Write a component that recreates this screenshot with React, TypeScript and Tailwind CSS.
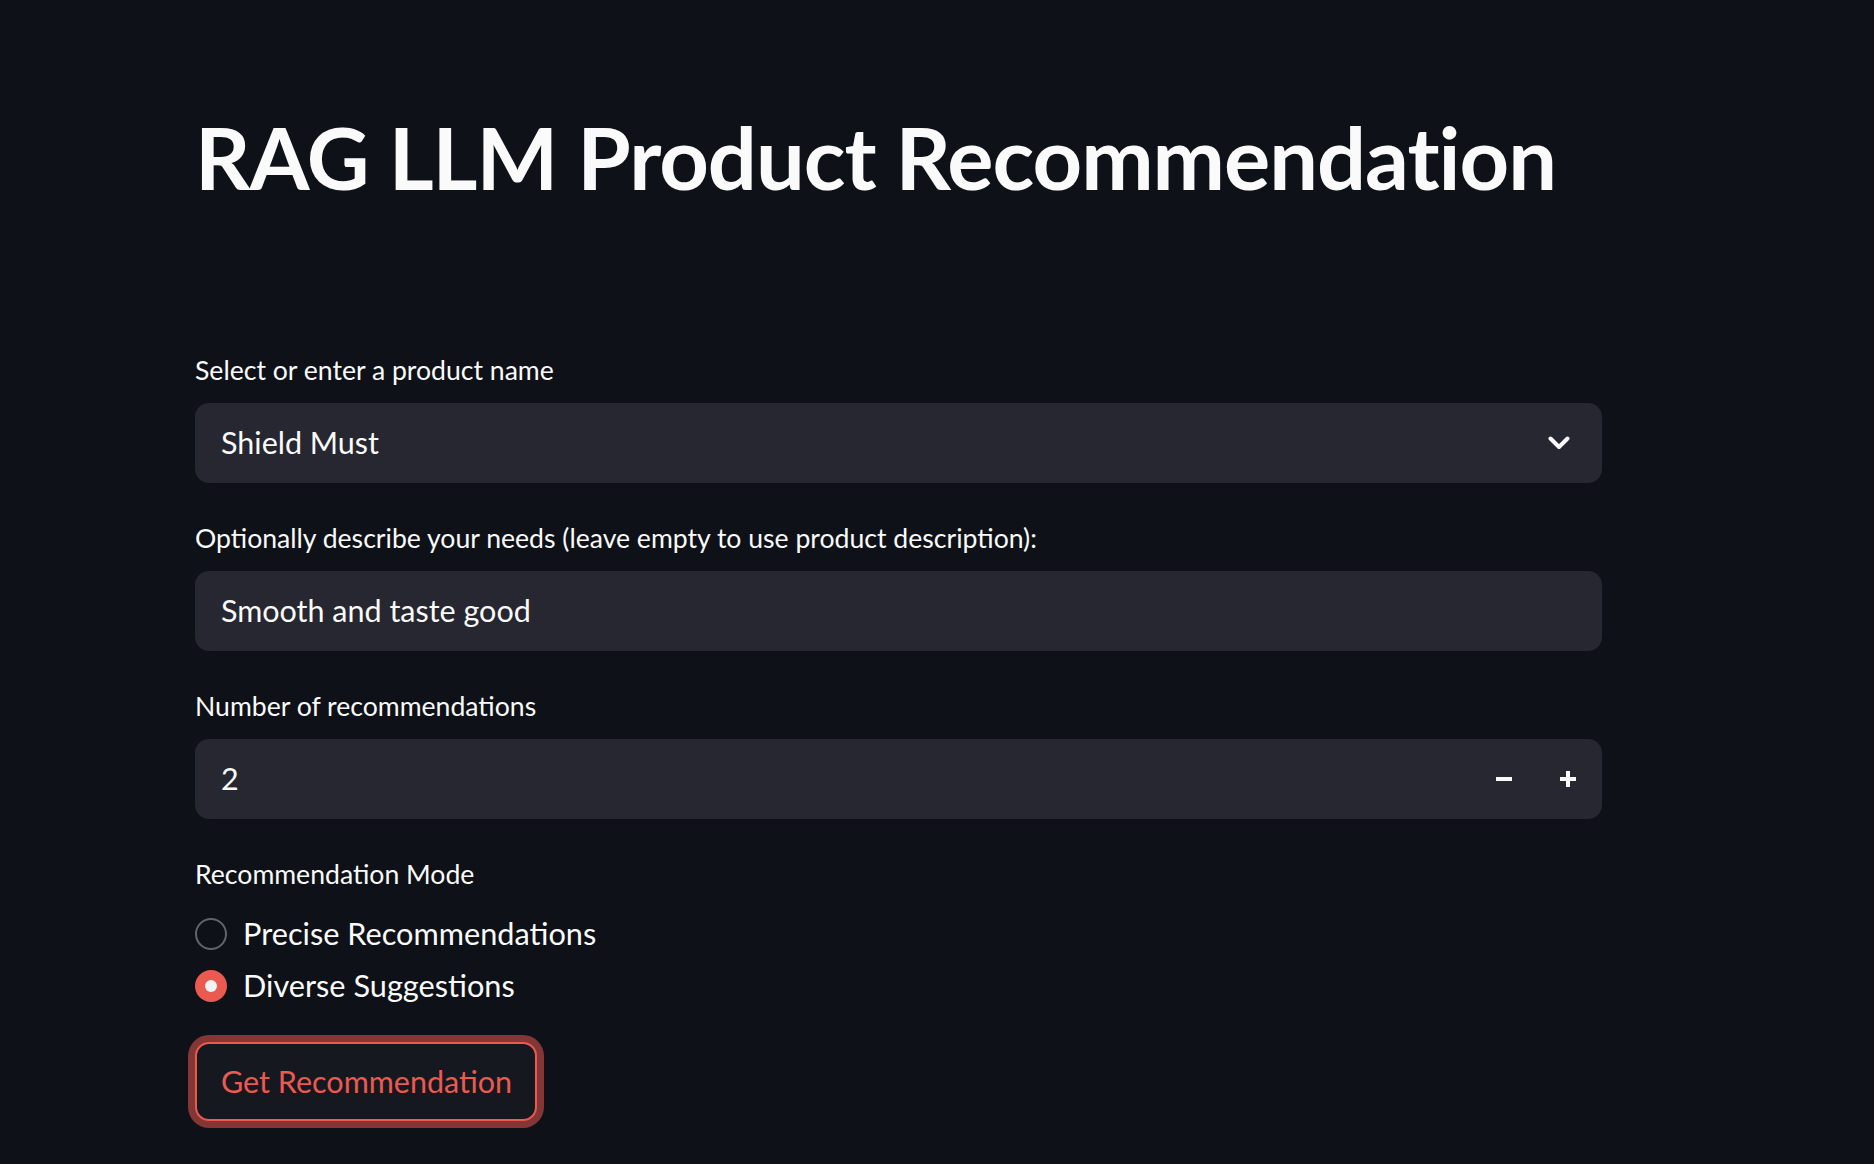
import React from "react";

const font = { fontFamily: "Lato, 'Noto Sans', sans-serif" };

function Label({ children }: { children: React.ReactNode }) {
  return (
    <div className="h-[40px] flex items-center mb-[12px] text-[26.6px] text-[#fafafa]">{children}</div>
  );
}

export default function App() {
  return (
    <div className="w-[1874px] h-[1164px] bg-[#0e1117] overflow-hidden" style={font}>
      <div className="pl-[195px] pt-[104px] w-[1602px] flex flex-col">
        <h1 className="h-[106px] flex items-center text-[86.5px] font-bold text-[#fafafa] tracking-[-1px] mb-[141px]">
          RAG LLM Product Recommendation
        </h1>

        <Label>Select or enter a product name</Label>
        <div className="h-[80px] rounded-[14px] bg-[#262730] flex items-center justify-between pl-[26px] pr-[32px] text-[30.5px] text-[#fafafa]">
          <span>Shield Must</span>
          <svg width="22" height="14" viewBox="0 0 22 14" fill="none">
            <path d="M2.5 2.5 L11 11 L19.5 2.5" stroke="#fafafa" strokeWidth="4" strokeLinecap="round" strokeLinejoin="round" />
          </svg>
        </div>

        <div className="h-[36px]" />
        <Label>Optionally describe your needs (leave empty to use product description):</Label>
        <div className="h-[80px] rounded-[14px] bg-[#262730] flex items-center pl-[26px] text-[30.5px] text-[#fafafa]">
          Smooth and taste good
        </div>

        <div className="h-[36px]" />
        <Label>Number of recommendations</Label>
        <div className="h-[80px] rounded-[14px] bg-[#262730] flex items-center justify-between pl-[26px] pr-[26px] text-[30.5px] text-[#fafafa]">
          <span>2</span>
          <div className="flex items-center gap-[48px]">
            <div className="w-[16px] h-[16px] flex items-center">
              <div className="w-[16px] h-[4px] bg-[#fafafa]" />
            </div>
            <div className="relative w-[16px] h-[16px]">
              <div className="absolute left-0 top-[6px] w-[16px] h-[4px] bg-[#fafafa]" />
              <div className="absolute left-[6px] top-0 w-[4px] h-[16px] bg-[#fafafa]" />
            </div>
          </div>
        </div>

        <div className="h-[36px]" />
        <div className="h-[40px] flex items-center text-[26.6px] text-[#fafafa] mb-[13px]">Recommendation Mode</div>
        <div className="h-[52px] flex items-center gap-[16px] text-[30.7px] text-[#fafafa]">
          <div className="w-[32px] h-[32px] rounded-full border-2 border-[#62646c]" />
          <span>Precise Recommendations</span>
        </div>
        <div className="h-[52px] flex items-center gap-[16px] text-[30.7px] text-[#fafafa]">
          <div className="w-[32px] h-[32px] rounded-full bg-[#ea5a50] flex items-center justify-center">
            <div className="w-[12px] h-[12px] rounded-full bg-[#f0f2f6]" />
          </div>
          <span>Diverse Suggestions</span>
        </div>

        <div className="h-[30px]" />
        <div>
          <button className="h-[79px] w-[342px] rounded-[14px] border-2 border-[#ea5a50] bg-[#161820] text-[#ea5a50] text-[30.5px] shadow-[0_0_0_7px_#843635] flex items-center pl-[24px]" style={font}>
            Get Recommendation
          </button>
        </div>
      </div>
    </div>
  );
}
